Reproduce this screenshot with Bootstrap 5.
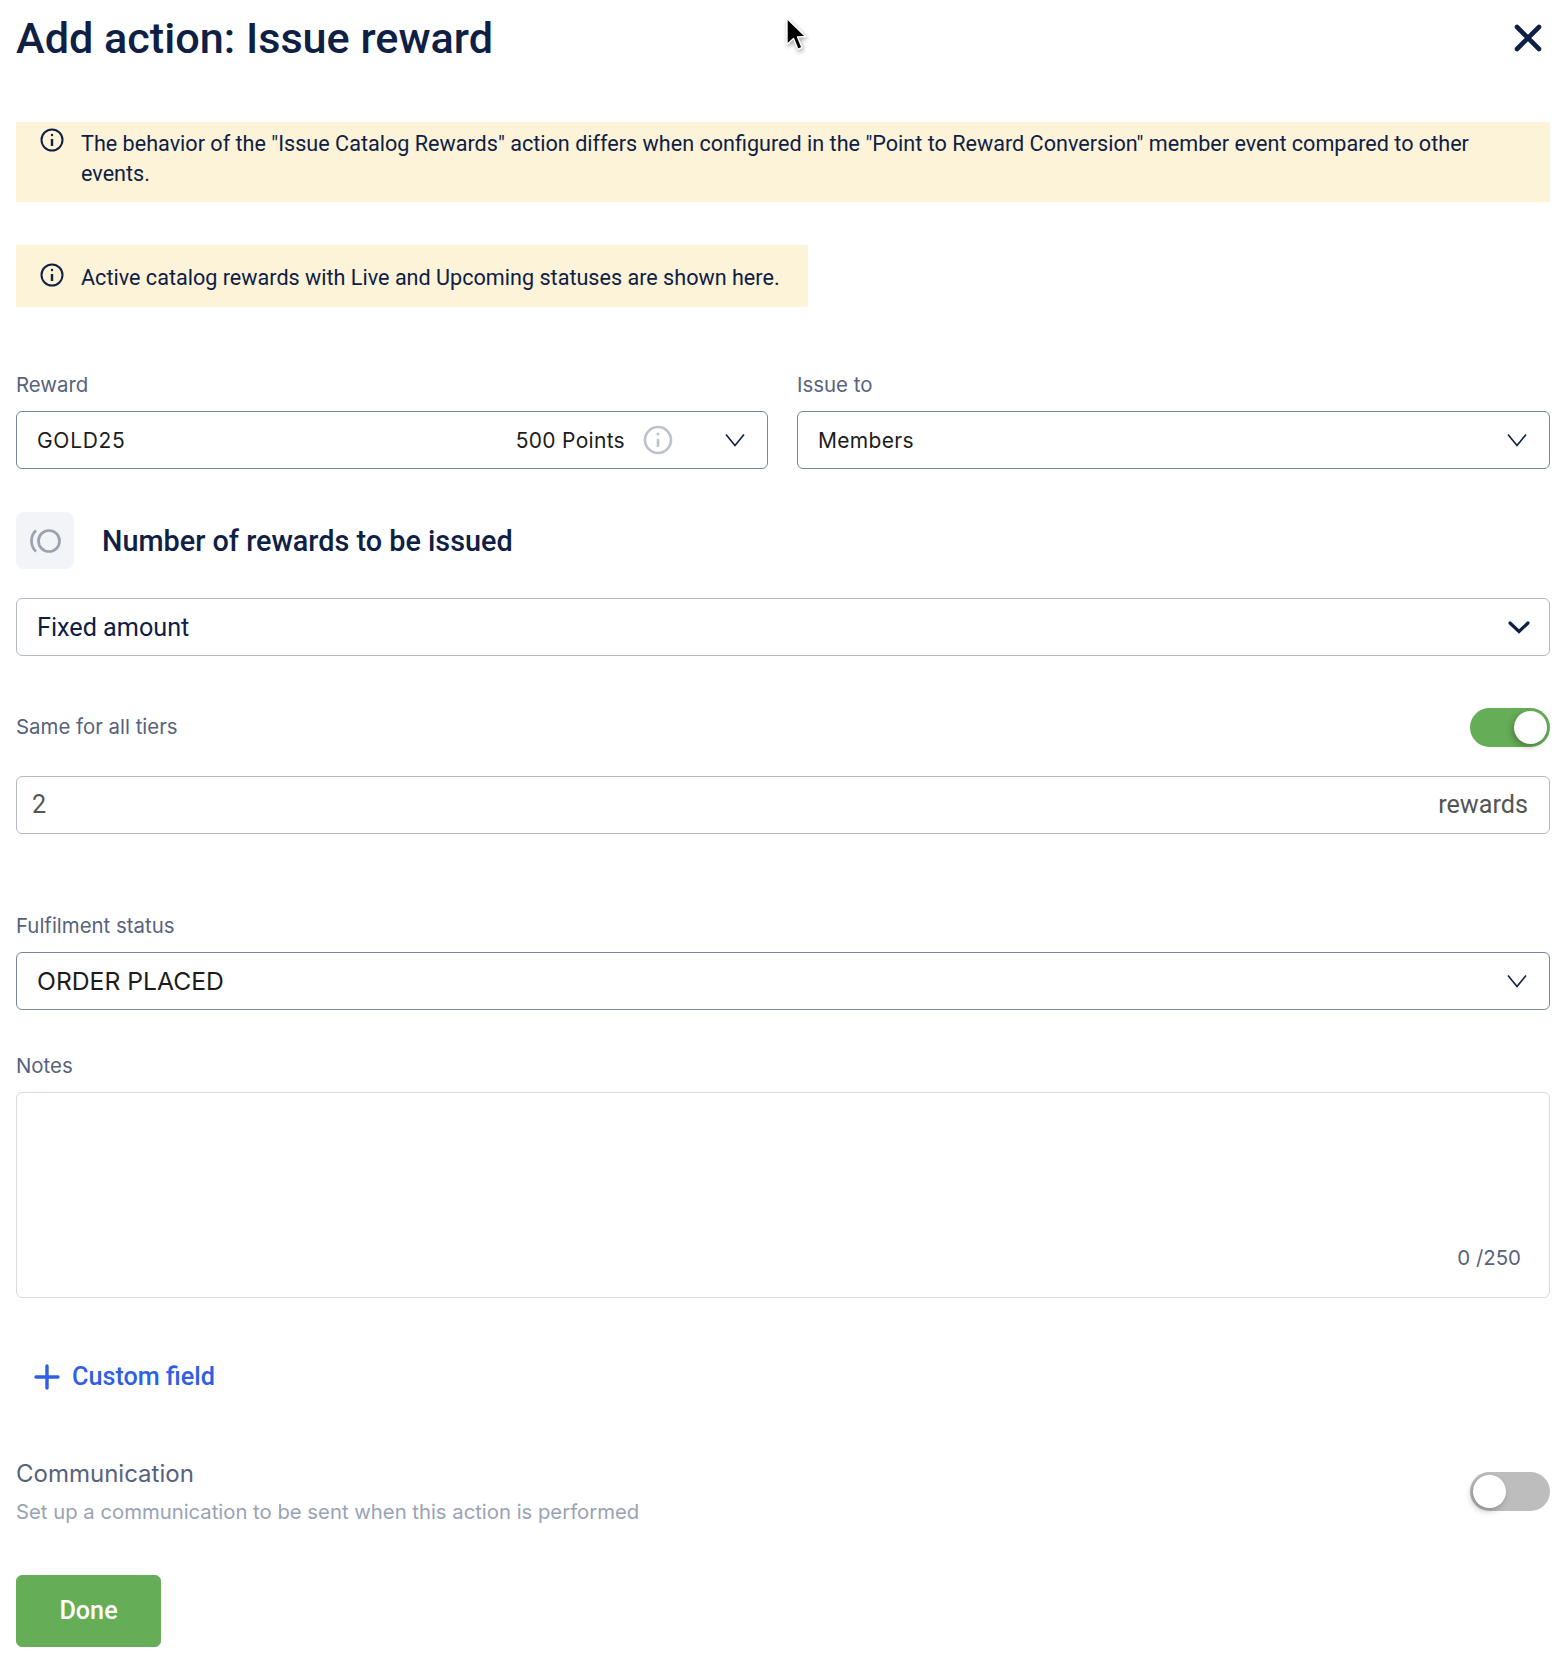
<!DOCTYPE html>
<html lang="en">
<head>
    <meta charset="UTF-8">
    <title>Add action: Issue reward</title>
    <link href="https://cdn.jsdelivr.net/npm/bootstrap@5.3.0/dist/css/bootstrap.min.css" rel="stylesheet">
    <style>
        body {
            font-family: Roboto, "Liberation Sans", sans-serif;
            background-color: #fff;
            color: #0f2044;
            height: 1656px;
            overflow: hidden;
        }

        .page-wrap {
            padding: 0 18px 0 16px;
            position: relative;
        }

        .page-head {
            height: 76px;
        }

        .page-title {
            font-size: 43.2px;
            font-weight: 500;
            line-height: 76px;
            padding-top: 2px;
            margin: 0;
            color: #0f2044;
        }

        .close-x {
            margin-right: 8px;
        }

        .info-note {
            background-color: #fcf3d9;
            color: #0f2044;
            font-size: 21.6px;
            line-height: 30px;
            display: flex;
            gap: 17px;
        }

        .note-wide {
            margin-top: 46px;
            padding: 7px 40px 13px 24px;
        }

        .note-short {
            margin-top: 43px;
            width: 792px;
            padding: 18px 24px 14px;
        }

        .note-icon {
            flex: none;
            margin-top: -1px;
        }

        .note-short .note-icon {
            margin-top: 0;
        }

        .field-label {
            font-family: Inter, sans-serif;
            color: #57627d;
            font-size: 20.4px;
            line-height: 26px;
            margin-bottom: 13px;
        }

        .field-box {
            height: 58px;
            border: 1px solid #7a849b;
            border-radius: 6px;
            padding: 0 22px 0 20px;
            color: #1c1c1c;
            font-family: Inter, sans-serif;
            font-size: 21px;
            letter-spacing: .3px;
        }

        .field-box span {
            padding-top: 2px;
        }

        .field-soft {
            border-color: #b4b9c8;
        }

        .reward-row {
            margin-top: 65px;
            display: grid;
            grid-template-columns: 752px 753px;
            gap: 29px;
        }

        .gold-code {
            letter-spacing: .7px;
        }

        .points-info {
            margin-left: 18px;
        }

        .reward-chevron {
            margin-left: 52px;
        }

        .count-head {
            margin-top: 43px;
            gap: 28px;
        }

        .count-icon {
            width: 58px;
            height: 57px;
            background-color: #f2f4f7;
            border-radius: 8px;
        }

        .count-title {
            font-size: 28.8px;
            font-weight: 500;
            margin: 0;
            padding-top: 2px;
            color: #0f2044;
        }

        .fixed-box {
            margin-top: 29px;
            padding-right: 19px;
            color: #0f2044;
            font-family: Roboto, sans-serif;
            font-size: 25.2px;
            letter-spacing: 0;
        }

        .same-row {
            margin-top: 52px;
            height: 39px;
            font-family: Inter, sans-serif;
            color: #57627d;
            font-size: 20.4px;
        }

        .toggle-track {
            width: 80px;
            height: 39px;
            border-radius: 20px;
            padding: 3px;
        }

        .toggle-on {
            background-color: #65ad57;
            justify-content: flex-end;
        }

        .toggle-off {
            background-color: #bdbdbd;
            justify-content: flex-start;
        }

        .toggle-knob {
            width: 33px;
            height: 33px;
            border-radius: 50%;
            background-color: #fff;
            box-shadow: -2px 3px 6px rgba(0, 0, 0, .25);
        }

        .amount-box {
            margin-top: 29px;
            padding: 0 21px 0 15px;
            color: #555;
            font-family: Roboto, sans-serif;
            font-size: 25.2px;
            letter-spacing: 0;
        }

        .amount-box span {
            padding-top: 0;
        }

        .fulfil-group {
            margin-top: 79px;
        }

        .fulfil-box {
            font-size: 24.7px;
            letter-spacing: 0;
            color: #1c1c1c;
        }

        .notes-group {
            margin-top: 43px;
        }

        .notes-box {
            height: 206px;
            border: 1px solid #d9dbe0;
            border-radius: 6px;
            padding: 0 28px 26px;
            font-family: Inter, sans-serif;
            color: #57627d;
            font-size: 20.4px;
            line-height: 26px;
        }

        .add-link {
            margin-top: 61px;
            padding-left: 18px;
            gap: 12px;
            color: #2f5fe3;
            font-size: 25.2px;
            font-weight: 500;
            line-height: 36px;
            text-decoration: none;
        }

        .comm-row {
            margin-top: 63px;
        }

        .comm-title {
            font-family: Inter, sans-serif;
            color: #57627d;
            font-size: 24px;
            line-height: 32px;
        }

        .comm-sub {
            font-family: Inter, sans-serif;
            color: #9aa2b5;
            font-size: 20.3px;
            line-height: 26px;
            margin-top: 9px;
        }

        .done-btn {
            margin-top: 50px;
            width: 145px;
            height: 72px;
            background-color: #65ad57;
            border-color: #65ad57;
            border-radius: 6px;
            color: #fff;
            font-size: 25.2px;
            font-weight: 500;
        }

        .mouse-pointer {
            position: absolute;
            left: 784px;
            top: 16px;
            filter: drop-shadow(1px 2px 2px rgba(0, 0, 0, .35));
        }
    </style>
</head>
<body>
    <div class="page-wrap">
        <div class="page-head d-flex justify-content-between align-items-center">
            <h1 class="page-title">Add action: Issue reward</h1>
            <svg class="close-x" width="28" height="28" viewBox="0 0 28 28" fill="none" stroke="#0f2044" stroke-width="4.6" stroke-linecap="round"><path d="M3 3l22 22M25 3L3 25"/></svg>
        </div>

        <svg class="mouse-pointer" width="24" height="38" viewBox="0 0 24 38"><path d="M3 2.500v26l6.500-6 4.500 11 4-2-4.500-10.500 8-.5z" fill="#000" stroke="#fff" stroke-width="1.400" stroke-linejoin="round"/></svg>

        <div class="info-note note-wide">
            <svg class="note-icon" width="24" height="24" viewBox="0 0 24 24" fill="none" stroke="#0f2044" stroke-width="2"><circle cx="12" cy="12" r="10.5"/><path d="M12 11v7" stroke-width="2.4"/><circle cx="12" cy="7" r="1.2" fill="#0f2044" stroke="none"/></svg>
            <div>The behavior of the "Issue Catalog Rewards" action differs when configured in the "Point to Reward Conversion" member event compared to other events.</div>
        </div>

        <div class="info-note note-short">
            <svg class="note-icon" width="24" height="24" viewBox="0 0 24 24" fill="none" stroke="#0f2044" stroke-width="2"><circle cx="12" cy="12" r="10.5"/><path d="M12 11v7" stroke-width="2.4"/><circle cx="12" cy="7" r="1.2" fill="#0f2044" stroke="none"/></svg>
            <div>Active catalog rewards with Live and Upcoming statuses are shown here.</div>
        </div>

        <div class="reward-row">
            <div>
                <div class="field-label">Reward</div>
                <div class="field-box d-flex align-items-center">
                    <span class="gold-code flex-grow-1">GOLD25</span>
                    <span>500 Points</span>
                    <svg class="points-info" width="30" height="30" viewBox="0 0 30 30" fill="none" stroke="#bcc1cd" stroke-width="2.6"><circle cx="15" cy="15" r="13"/><path d="M15 14v8" stroke-width="2.6"/><circle cx="15" cy="9" r="1.6" fill="#bcc1cd" stroke="none"/></svg>
                    <svg class="reward-chevron" width="20" height="14" viewBox="0 0 20 14" fill="none" stroke="#0f2044" stroke-width="1.6"><path d="M1 1.5l9 11 9-11"/></svg>
                </div>
            </div>
            <div>
                <div class="field-label">Issue to</div>
                <div class="field-box d-flex align-items-center justify-content-between">
                    <span>Members</span>
                    <svg width="20" height="14" viewBox="0 0 20 14" fill="none" stroke="#0f2044" stroke-width="1.6"><path d="M1 1.5l9 11 9-11"/></svg>
                </div>
            </div>
        </div>

        <div class="count-head d-flex align-items-center">
            <div class="count-icon d-flex align-items-center justify-content-center">
                <svg width="34" height="26" viewBox="0 0 34 26" fill="none" stroke="#9ba1ae" stroke-width="2.7"><circle cx="21" cy="13" r="10.5"/><path d="M8 2.5C2 8 2 18 8 23.5"/></svg>
            </div>
            <h2 class="count-title">Number of rewards to be issued</h2>
        </div>

        <div class="field-box field-soft fixed-box d-flex align-items-center justify-content-between">
            <span>Fixed amount</span>
            <svg width="22" height="14" viewBox="0 0 22 14" fill="none" stroke="#0f2044" stroke-width="3.2" stroke-linecap="round"><path d="M2 3l9 8.5L20 3"/></svg>
        </div>

        <div class="same-row d-flex align-items-center justify-content-between">
            <span>Same for all tiers</span>
            <div class="toggle-track toggle-on d-flex"><div class="toggle-knob"></div></div>
        </div>

        <div class="field-box field-soft amount-box d-flex align-items-center justify-content-between">
            <span>2</span>
            <span>rewards</span>
        </div>

        <div class="fulfil-group">
            <div class="field-label">Fulfilment status</div>
            <div class="field-box fulfil-box d-flex align-items-center justify-content-between">
                <span>ORDER PLACED</span>
                <svg width="20" height="14" viewBox="0 0 20 14" fill="none" stroke="#0f2044" stroke-width="1.6"><path d="M1 1.5l9 11 9-11"/></svg>
            </div>
        </div>

        <div class="notes-group">
            <div class="field-label">Notes</div>
            <div class="notes-box d-flex align-items-end justify-content-end">0 /250</div>
        </div>

        <a class="add-link d-flex align-items-center" href="#">
            <svg width="26" height="26" viewBox="0 0 26 26" fill="none" stroke="#2f5fe3" stroke-width="3.4" stroke-linecap="round"><path d="M13 2v22M2 13h22"/></svg>
            Custom field
        </a>

        <div class="comm-row d-flex align-items-center justify-content-between">
            <div>
                <div class="comm-title">Communication</div>
                <div class="comm-sub">Set up a communication to be sent when this action is performed</div>
            </div>
            <div class="toggle-track toggle-off d-flex"><div class="toggle-knob"></div></div>
        </div>

        <button type="button" class="btn done-btn d-block">Done</button>
    </div>

    <script src="https://cdn.jsdelivr.net/npm/bootstrap@5.3.0/dist/js/bootstrap.bundle.min.js"></script>
</body>
</html>
